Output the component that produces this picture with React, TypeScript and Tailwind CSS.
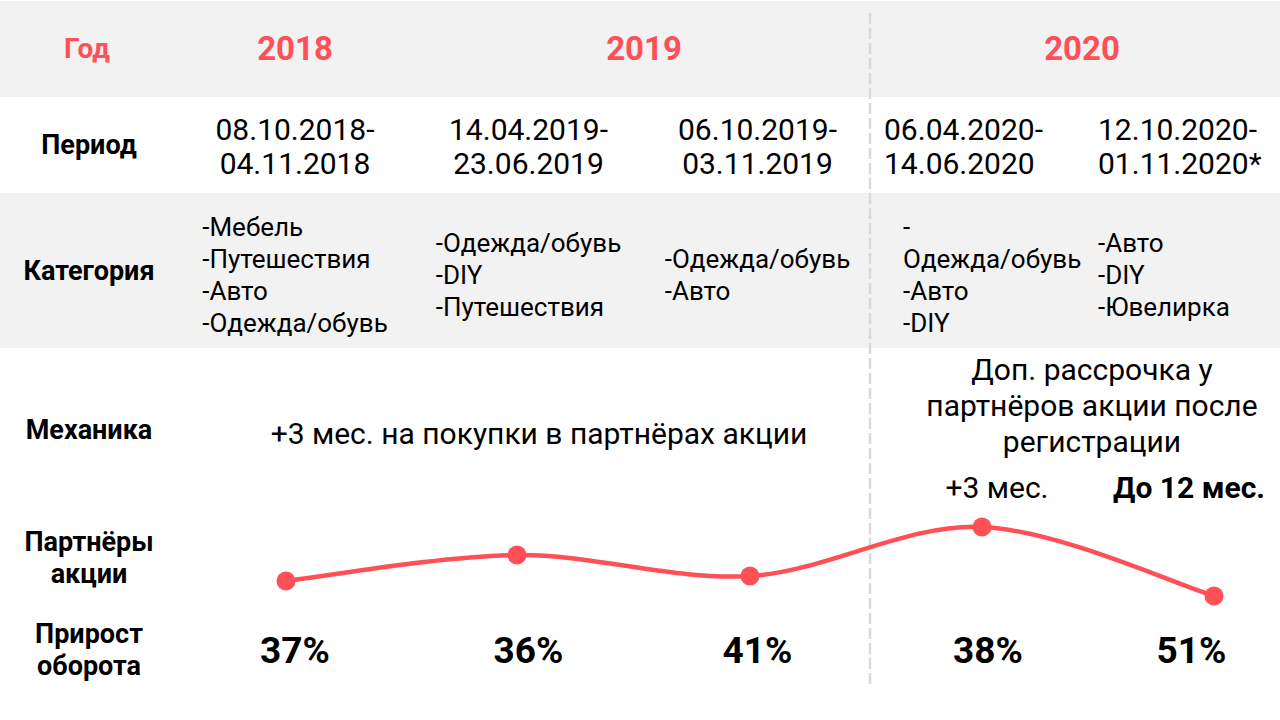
import React from "react";

const grid = "grid grid-cols-[178px_234px_233px_225px_220px_190px]";
const red = "text-[#ff4f57]";

const periods = [
  { a: "08.10.2018-", b: "04.11.2018", align: "center" },
  { a: "14.04.2019-", b: "23.06.2019", align: "center" },
  { a: "06.10.2019-", b: "03.11.2019", align: "center" },
  { a: "06.04.2020-", b: "14.06.2020", align: "left4" },
  { a: "12.10.2020-", b: "01.11.2020*", align: "left5" },
];

const categories = [
  ["-Мебель", "-Путешествия", "-Авто", "-Одежда/обувь"],
  ["-Одежда/обувь", "-DIY", "-Путешествия"],
  ["-Одежда/обувь", "-Авто"],
  ["-", "Одежда/обувь", "-Авто", "-DIY"],
  ["-Авто", "-DIY", "-Ювелирка"],
];

const growth = ["37%", "36%", "41%", "38%", "51%"];

// dots of the "Партнёры акции" curve, relative to the chart box
const pts: [number, number][] = [
  [108, 76],
  [339, 50],
  [572, 71],
  [804, 22],
  [1036, 91],
];

function curvePath(p: [number, number][]) {
  let d = `M ${p[0][0]} ${p[0][1]}`;
  for (let i = 0; i < p.length - 1; i++) {
    const p0 = p[i - 1] ?? p[i];
    const p1 = p[i];
    const p2 = p[i + 1];
    const p3 = p[i + 2] ?? p2;
    const c1x = p1[0] + (p2[0] - p0[0]) / 6;
    const c1y = p1[1] + (p2[1] - p0[1]) / 6;
    const c2x = p2[0] - (p3[0] - p1[0]) / 6;
    const c2y = p2[1] - (p3[1] - p1[1]) / 6;
    d += ` C ${c1x} ${c1y} ${c2x} ${c2y} ${p2[0]} ${p2[1]}`;
  }
  return d;
}

function Label({ children }: { children: React.ReactNode }) {
  return (
    <div className="flex items-center justify-center text-center text-[27px] font-bold leading-[32px] text-black">
      {children}
    </div>
  );
}

export default function App() {
  return (
    <div
      className="relative h-[720px] w-[1280px] overflow-hidden bg-white pt-px text-black"
      style={{ fontFamily: "Roboto, 'Noto Sans', sans-serif" }}
    >
      {/* year row */}
      <div className={`${grid} h-[96px] bg-[#f2f2f2]`}>
        <div className={`flex items-center justify-center pr-[4px] text-[28px] font-bold ${red}`}>Год</div>
        <div className={`flex items-center justify-center text-[33px] font-bold ${red}`}>2018</div>
        <div className={`col-span-2 flex items-center justify-center pl-[6px] text-[33px] font-bold ${red}`}>
          2019
        </div>
        <div className={`col-span-2 flex items-center justify-center pl-[14px] text-[33px] font-bold ${red}`}>
          2020
        </div>
      </div>

      {/* period row */}
      <div className={`${grid} h-[96px]`}>
        <Label>Период</Label>
        {periods.map((p) => (
          <div
            key={p.a}
            className={`flex flex-col justify-center pt-1 text-[30px] leading-[34px] ${
              p.align === "center" ? "items-center" : p.align === "left4" ? "items-start pl-[14px]" : "items-start pl-[8px]"
            }`}
          >
            <span>{p.a}</span>
            <span>{p.b}</span>
          </div>
        ))}
      </div>

      {/* category row */}
      <div className={`${grid} h-[155px] bg-[#f2f2f2]`}>
        <Label>Категория</Label>
        {categories.map((c, i) => (
          <div
            key={i}
            className={`flex items-center pt-[8px] text-[26px] leading-[32px] ${
              i < 3 ? "justify-center" : i === 3 ? "justify-start pl-[33px]" : "justify-start pl-[8px]"
            }`}
          >
            <div className="text-left">
              {c.map((l, j) => (
                <div key={j}>{l}</div>
              ))}
            </div>
          </div>
        ))}
      </div>

      {/* mechanics row */}
      <div className={`${grid} h-[157px]`}>
        <div className="flex items-center justify-center pt-[6px] text-[27px] font-bold">Механика</div>
        <div className="col-span-3 flex items-center justify-center pl-[30px] pt-[12px] text-[30px]">
          +3 мес. на покупки в партнёрах акции
        </div>
        <div className="col-span-2 flex flex-col pt-[4px] text-[30px] leading-[36px]">
          <div className="pl-[34px] text-center">
            Доп. рассрочка у<br />
            партнёров акции после<br />
            регистрации
          </div>
          <div className="mt-[10px] grid grid-cols-[220px_190px]">
            <div className="pl-[34px] text-center">+3 мес.</div>
            <div className="pl-[8px] text-center font-bold">До 12 мес.</div>
          </div>
        </div>
      </div>

      {/* partners curve row */}
      <div className="grid h-[105px] grid-cols-[178px_1102px]">
        <Label>
          Партнёры
          <br />
          акции
        </Label>
        <svg width="1102" height="105" viewBox="0 0 1102 105" className="relative z-10">
          <path d={curvePath(pts)} fill="none" stroke="#ff4f57" strokeWidth="4.5" strokeLinecap="round" />
          {pts.map(([x, y]) => (
            <circle key={x} cx={x} cy={y} r="9.5" fill="#ff4f57" />
          ))}
        </svg>
      </div>

      {/* growth row */}
      <div className={`${grid} h-[80px]`}>
        <Label>
          Прирост
          <br />
          оборота
        </Label>
        {growth.map((g, i) => (
          <div
            key={g}
            className={`flex items-center justify-center pt-[2px] text-[37px] font-bold ${
              i === 3 ? "pl-[16px]" : i === 4 ? "pl-[13px]" : ""
            }`}
          >
            {g}
          </div>
        ))}
      </div>

      {/* divider between 2019 and 2020 */}
      <svg className="absolute left-[868px] top-[13px]" width="4" height="672">
        <line x1="2" y1="0" x2="2" y2="672" stroke="#d9d9d9" strokeWidth="2.5" strokeDasharray="11 4" />
      </svg>
    </div>
  );
}
